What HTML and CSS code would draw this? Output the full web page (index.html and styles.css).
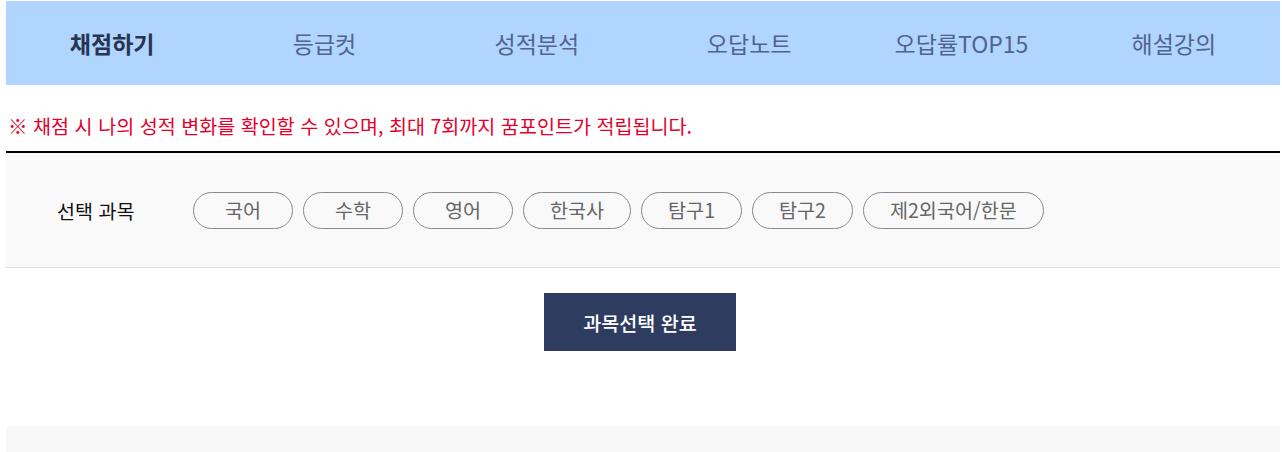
FILE: index.html
```html
<!DOCTYPE html>
<html lang="ko">
<head>
<meta charset="utf-8">
<title>채점하기</title>
<link rel="stylesheet" href="styles.css">
</head>
<body>
<div class="page">
  <nav class="tabs">
    <a class="tab active">채점하기</a>
    <a class="tab">등급컷</a>
    <a class="tab">성적분석</a>
    <a class="tab">오답노트</a>
    <a class="tab">오답률TOP15</a>
    <a class="tab">해설강의</a>
  </nav>
  <p class="notice">※ 채점 시 나의 성적 변화를 확인할 수 있으며, 최대 7회까지 꿈포인트가 적립됩니다.</p>
  <section class="subjects">
    <span class="label">선택 과목</span>
    <div class="pills">
      <button class="pill">국어</button>
      <button class="pill">수학</button>
      <button class="pill">영어</button>
      <button class="pill">한국사</button>
      <button class="pill">탐구1</button>
      <button class="pill">탐구2</button>
      <button class="pill">제2외국어/한문</button>
    </div>
  </section>
  <div class="actions">
    <button class="submit">과목선택 완료</button>
  </div>
  <div class="footer-strip"></div>
</div>
</body>
</html>
```

FILE: styles.css
```css
* { box-sizing: border-box; }
html, body { margin: 0; padding: 0; background: #fff; }
body {
  font-family: "Noto Sans CJK KR", "Noto Sans", sans-serif;
  color: #222;
}
.page {
  margin: 1px 2px 0 6px;
  display: flex;
  flex-direction: column;
}
.tabs {
  display: grid;
  grid-template-columns: repeat(6, 1fr);
  height: 84px;
  background: #b0d5fe;
}
.tab {
  display: flex;
  align-items: center;
  justify-content: center;
  font-size: 23px;
  line-height: 30px;
  color: #51638e;
  cursor: pointer;
}
.tab.active {
  font-weight: 700;
  color: #283451;
}
.notice {
  margin: 0;
  padding: 29px 0 13px 2px;
  line-height: 24px;
  font-size: 19.6px;
  color: #e4002b;
  border-bottom: 2px solid #000;
}
.subjects {
  display: flex;
  align-items: center;
  height: 115px;
  padding-left: 51px;
  background: #f9f9f9;
  border-bottom: 1px solid #dddddd;
}
.label {
  width: 136px;
  font-size: 19.6px;
  color: #111;
}
.pills {
  display: flex;
  gap: 10px;
}
.pill {
  height: 37px;
  min-width: 100px;
  padding: 0 26px;
  border: 1px solid #8a8a8a;
  border-radius: 19px;
  background: transparent;
  font-family: inherit;
  font-size: 19.6px;
  line-height: 24px;
  color: #666;
  cursor: pointer;
}
.actions {
  display: flex;
  justify-content: center;
  padding: 25px 6px 0 0;
  height: 158px;
}
.submit {
  width: 192px;
  height: 58px;
  border: 0;
  background: #2e3c60;
  color: #fff;
  font-family: inherit;
  font-size: 19.6px;
  font-weight: 500;
  cursor: pointer;
}
.footer-strip {
  height: 26px;
  background: #f8f8f8;
}
```
